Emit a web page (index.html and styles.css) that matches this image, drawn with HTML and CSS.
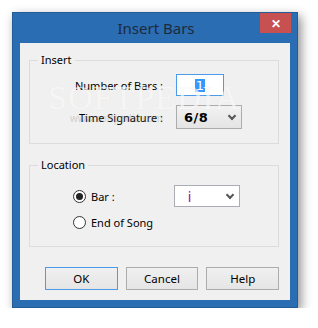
FILE: index.html
```html
<!DOCTYPE html>
<html lang="en">
<head>
    <title>Insert Bars</title>
    <meta name='viewport' content='width=device-width, initial-scale=1'>
    <link rel="stylesheet" href="styles.css">
</head>
<body>
<div class="window">
    <div class="titlebar">
        <span class="title">Insert Bars</span>
        <span class="close">&#x2715;</span>
    </div>
    <div class="client">
        <fieldset class="group group-insert">
            <legend>Insert</legend>
            <div class="row">
                <span class="label">Number of Bars :</span>
                <span class="textbox"><span class="selected">1</span></span>
            </div>
            <div class="row">
                <span class="label">Time Signature :</span>
                <span class="combo combo-flat"><span class="combo-text bold">6/8</span><span class="chevron"></span></span>
            </div>
        </fieldset>
        <fieldset class="group group-location">
            <legend>Location</legend>
            <div class="row">
                <span class="radio checked"></span>
                <span class="radio-label">Bar :</span>
                <span class="combo combo-white"><span class="combo-text pink">i</span><span class="chevron"></span></span>
            </div>
            <div class="row">
                <span class="radio"></span>
                <span class="radio-label">End of Song</span>
            </div>
        </fieldset>
        <div class="buttons">
            <button class="default">OK</button>
            <button>Cancel</button>
            <button>Help</button>
        </div>
        <div class="watermark">SOFTPEDIA<small>www.softpedia.com</small></div>
    </div>
</div>
</body>
</html>
```
FILE: styles.css
```css
:root {
    --frame: #2b6db2;
    --face: #f0f0f0;
    --line: #dcdcdc;
    --text: #000;
    --focus: #4c9be8;
    --btn-border: #acacac;
}

html {
    box-sizing: border-box;
}

*, *:before, *:after {
    box-sizing: inherit;
}

body {
    margin: 0;
    background: #fff;
    font-family: "Noto Sans", "Open Sans", sans-serif;
    font-size: 11px;
    color: var(--text);
}

.window {
    margin: 12px 0 0 12px;
    width: 286px;
    background: var(--frame);
    border: 1px solid #245c97;
    box-shadow: 3px 4px 10px rgba(0, 0, 0, 0.45);
    padding: 0 7px 7px;
}

.titlebar {
    position: relative;
    height: 30px;
    display: flex;
    align-items: center;
    justify-content: center;
}

.title {
    font-size: 15px;
    color: #1c2a3c;
    margin-left: 2px;
}

.close {
    position: absolute;
    top: 0;
    right: -1px;
    width: 31px;
    height: 20px;
    background: #c75050;
    color: #fff;
    font-size: 12px;
    font-weight: bold;
    display: flex;
    align-items: center;
    justify-content: center;
}

.client {
    position: relative;
    background: var(--face);
    height: 257px;
    padding: 9px 11px 0 9px;
}

.group {
    margin: 0;
    border: 1px solid var(--line);
    padding: 6px 0 14px;
}

.group legend {
    margin-left: 8px;
    padding: 0 3px;
    line-height: 16px;
}

.group-location {
    margin-top: 13px;
    padding: 12px 0 16px;
}

.row {
    display: flex;
    align-items: center;
}

.group-insert .row + .row {
    margin-top: 9px;
}

.label {
    width: 133px;
    text-align: right;
    margin-right: 13px;
}

.textbox {
    width: 48px;
    height: 22px;
    border: 1px solid var(--focus);
    background: #fff;
    display: flex;
    align-items: center;
    justify-content: center;
    font-family: "DejaVu Sans", sans-serif;
    font-size: 13px;
}

.selected {
    background: #3399ff;
    color: #fff;
    padding: 0 1px;
    line-height: 13px;
}

.combo {
    width: 66px;
    display: flex;
    align-items: center;
    justify-content: space-between;
    padding: 0 6px 0 7px;
}

.combo-flat {
    height: 24px;
    border: 1px solid var(--btn-border);
    background: linear-gradient(#f2f2f2, #e4e4e4);
}

.combo-white {
    height: 22px;
    margin-left: 59px;
    border: 1px solid #abadb3;
    background: #fff;
    padding-left: 13px;
}

.combo-text.bold {
    font-family: "DejaVu Sans", sans-serif;
    font-weight: bold;
    font-size: 13px;
    letter-spacing: 0.5px;
}

.combo-text.pink {
    color: #b000b0;
    font-size: 14px;
}

.chevron {
    width: 6px;
    height: 6px;
    border-right: 2px solid #555;
    border-bottom: 2px solid #555;
    transform: rotate(45deg);
    margin-top: -3px;
}

.radio {
    width: 13px;
    height: 13px;
    border: 1px solid #333;
    border-radius: 50%;
    background: #fff;
    margin-left: 43px;
    display: flex;
    align-items: center;
    justify-content: center;
}

.radio.checked:after {
    content: "";
    width: 7px;
    height: 7px;
    border-radius: 50%;
    background: #222;
}

.radio-label {
    margin-left: 5px;
}

.group-location .row + .row {
    margin-top: 8px;
}

.group-location .row:first-child .radio-label {
    width: 26px;
}

.buttons {
    display: flex;
    gap: 8px;
    margin: 20px 0 0 16px;
}

button {
    width: 73px;
    height: 23px;
    font-family: inherit;
    font-size: 11.5px;
    color: var(--text);
    border: 1px solid var(--btn-border);
    background: linear-gradient(#f0f0f0, #e5e5e5);
    padding: 0;
}

button.default {
    border-color: var(--focus);
}

.watermark {
    position: absolute;
    left: 28px;
    top: 36px;
    font-family: "Liberation Serif", serif;
    font-size: 34px;
    letter-spacing: 1px;
    color: rgba(255, 255, 255, 0.7);
    text-shadow: 0 0 1px rgba(0, 0, 0, 0.06);
    pointer-events: none;
}

.watermark small {
    display: block;
    font-family: "Noto Sans", sans-serif;
    font-size: 10px;
    letter-spacing: 0;
    margin: -6px 0 0 22px;
    color: rgba(160, 160, 160, 0.3);
}
```
